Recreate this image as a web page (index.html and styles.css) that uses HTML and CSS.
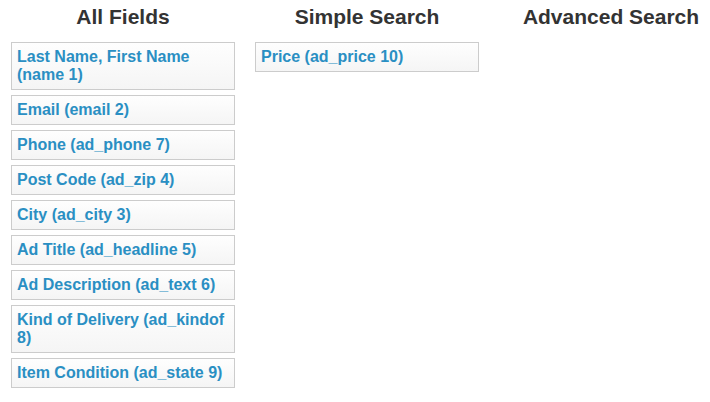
FILE: index.html
```html
<!DOCTYPE html>
<html>
<head>
<meta charset="utf-8">
<link rel="stylesheet" href="styles.css">
</head>
<body>
<div class="board">
  <section class="col">
    <h2 class="col-title">All Fields</h2>
    <ul class="fields">
      <li class="field">Last Name, First Name (name 1)</li>
      <li class="field">Email (email 2)</li>
      <li class="field">Phone (ad_phone 7)</li>
      <li class="field">Post Code (ad_zip 4)</li>
      <li class="field">City (ad_city 3)</li>
      <li class="field">Ad Title (ad_headline 5)</li>
      <li class="field">Ad Description (ad_text 6)</li>
      <li class="field">Kind of Delivery (ad_kindof 8)</li>
      <li class="field">Item Condition (ad_state 9)</li>
    </ul>
  </section>
  <section class="col">
    <h2 class="col-title">Simple Search</h2>
    <ul class="fields">
      <li class="field">Price (ad_price 10)</li>
    </ul>
  </section>
  <section class="col">
    <h2 class="col-title">Advanced Search</h2>
    <ul class="fields"></ul>
  </section>
</div>
</body>
</html>
```
FILE: styles.css
```css
html, body {
  margin: 0;
  padding: 0;
  background: #fff;
  overflow: hidden;
}
body {
  font-family: "Liberation Sans", Arial, sans-serif;
}
.board {
  display: flex;
  gap: 20px;
  padding-left: 11px;
  width: 720px;
  overflow: hidden;
}
.col {
  flex: 0 0 224px;
  width: 224px;
}
.col-title {
  margin: 5px 0 13px;
  font-size: 21px;
  line-height: 24px;
  font-weight: bold;
  color: #333;
  text-align: center;
}
.fields {
  list-style: none;
  margin: 0;
  padding: 0;
  display: flex;
  flex-direction: column;
  gap: 5px;
}
.field {
  border: 1px solid #cccccc;
  background: linear-gradient(#fefefe, #f5f5f5);
  padding: 5px 5px;
  font-size: 16px;
  line-height: 18px;
  font-weight: bold;
  color: #2a8fc3;
}
```
